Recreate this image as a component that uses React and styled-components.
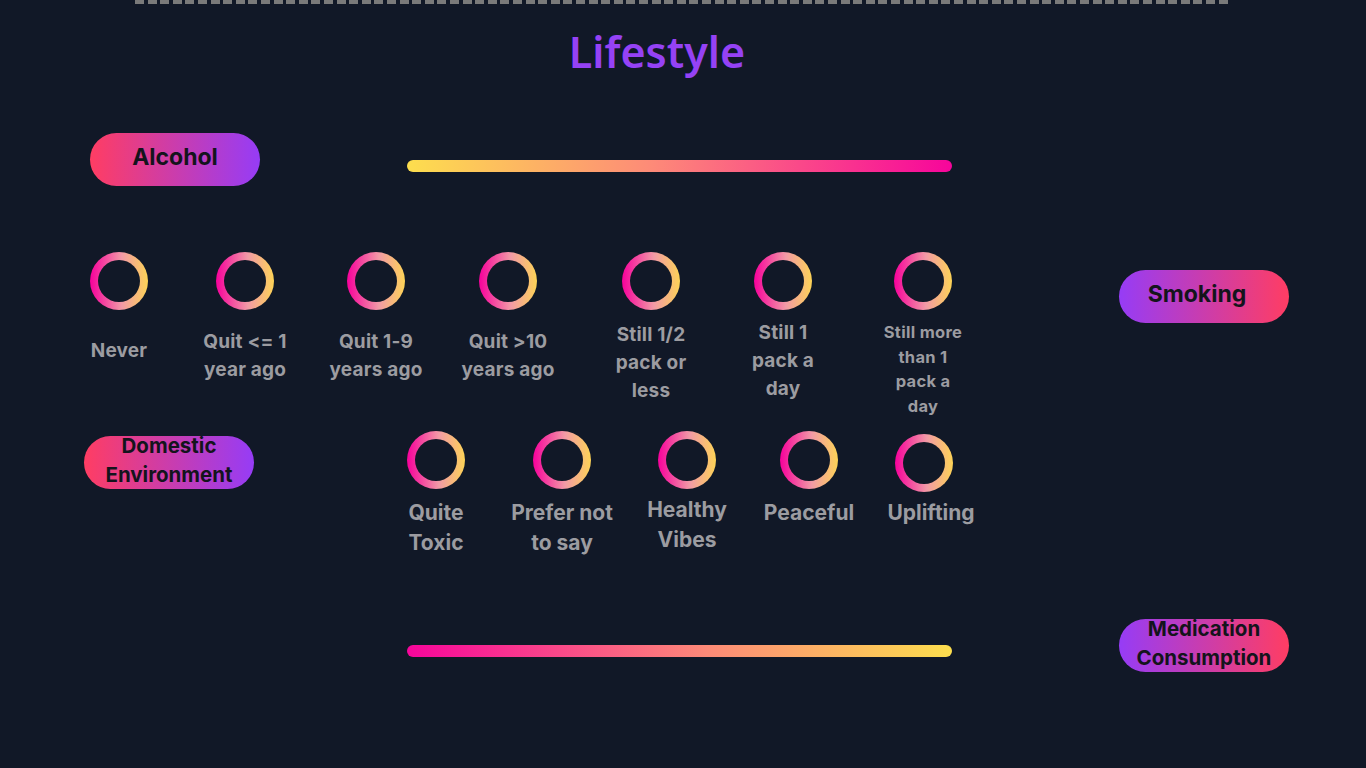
import React from 'react';
import styled, { createGlobalStyle } from 'styled-components';

const GlobalStyle = createGlobalStyle`
  html, body {
    margin: 0;
    padding: 0;
    background: #111827;
  }
  body {
    width: 1366px;
    height: 768px;
    overflow: hidden;
    font-family: Inter, "Liberation Sans", sans-serif;
  }
`;

const Page = styled.div`
  width: 1366px;
  height: 768px;
  background: #111827;
  display: flex;
  flex-direction: column;
`;

const DashedRule = styled.div`
  height: 4px;
  margin: 0 138px 0 135px;
  background: repeating-linear-gradient(90deg, #7a7a7a 0 9px, transparent 9px 12.6px);
`;

const Title = styled.h1`
  margin: 22px 0 0;
  padding-right: 52px;
  text-align: center;
  font-family: "Noto Sans", "DejaVu Sans", sans-serif;
  font-weight: 600;
  font-size: 43px;
  line-height: 52px;
  color: #9542f5;
`;

const Row = styled.div`
  display: flex;
  align-items: flex-start;
  margin-top: ${(p) => p.top}px;
  padding-left: ${(p) => p.left || 0}px;
  padding-right: ${(p) => p.right || 0}px;
`;

const Pill = styled.div`
  flex: none;
  width: 170px;
  height: 53px;
  border-radius: 27px;
  display: flex;
  align-items: center;
  justify-content: center;
  text-align: center;
  white-space: nowrap;
  margin-top: ${(p) => p.top || 0}px;
  margin-left: ${(p) => (p.push ? 'auto' : '0')};
  background: ${(p) =>
    p.reverse
      ? 'linear-gradient(90deg, #963cf6 0%, #ff3d63 100%)'
      : 'linear-gradient(90deg, #ff3d63 0%, #963cf6 100%)'};
  color: #14141c;
  font-weight: 700;
  font-size: ${(p) => p.size || 23}px;
  line-height: ${(p) => p.lh || 26}px;
  padding-right: ${(p) => p.shift || 0}px;
  padding-bottom: 5px;
  box-sizing: border-box;
`;

const Bar = styled.div`
  flex: none;
  width: 545px;
  height: 12px;
  border-radius: 6px;
  margin-top: ${(p) => p.top}px;
  margin-left: ${(p) => p.left}px;
  background: ${(p) =>
    p.reverse
      ? 'linear-gradient(90deg, #f7059b 0%, #fd8a78 55%, #fdde4e 100%)'
      : 'linear-gradient(90deg, #fdde4e 0%, #fd8a78 45%, #f7059b 100%)'};
`;

const Options = styled.div`
  display: grid;
  grid-template-columns: ${(p) => p.cols};
  margin-left: ${(p) => p.left || 0}px;
`;

const Option = styled.div`
  display: flex;
  flex-direction: column;
  align-items: center;
  padding-top: ${(p) => p.dy || 0}px;
`;

const Ring = styled.div`
  width: 58px;
  height: 58px;
  box-sizing: border-box;
  padding: 8px;
  border-radius: 50%;
  background: linear-gradient(90deg, #f7009b 0%, #f29aa6 55%, #fdd356 100%);
`;

const RingHole = styled.div`
  width: 100%;
  height: 100%;
  border-radius: 50%;
  background: #111827;
`;

const Label = styled.div`
  margin-top: ${(p) => p.gap}px;
  margin-left: ${(p) => (p.dx || 0) * 2}px;
  text-align: center;
  color: #9c9ca1;
  font-weight: 700;
  font-size: ${(p) => p.size}px;
  line-height: ${(p) => p.lh}px;
  letter-spacing: ${(p) => p.ls || 0}px;
  white-space: pre;
`;

const smoking = [
  { text: 'Never', gap: 27 },
  { text: 'Quit <= 1\nyear ago', gap: 18 },
  { text: 'Quit 1-9\nyears ago', gap: 18 },
  { text: 'Quit >10\nyears ago', gap: 18 },
  { text: 'Still 1/2\npack or\nless', gap: 11 },
  { text: 'Still 1\npack a\nday', gap: 9 },
  { text: 'Still more\nthan 1\npack a\nday', gap: 10, size: 16.5, lh: 24.5, ls: 0.3 },
];

const domestic = [
  { text: 'Quite\nToxic', gap: 9 },
  { text: 'Prefer not\nto say', gap: 9, dy: -4 },
  { text: 'Healthy\nVibes', gap: 6 },
  { text: 'Peaceful', gap: 9 },
  { text: 'Uplifting', gap: 6, dy: 3, dx: 7 },
];

const OptionItem = ({ text, gap, dy, dx, size = 19, lh = 28, ls = 0.2 }) => (
  <Option dy={dy}>
    <Ring>
      <RingHole />
    </Ring>
    <Label gap={gap} dx={dx} size={size} lh={lh} ls={ls}>
      {text}
    </Label>
  </Option>
);

export default function App() {
  return (
    <Page>
      <GlobalStyle />
      <DashedRule />
      <Title>Lifestyle</Title>

      <Row top={55} left={90}>
        <Pill>Alcohol</Pill>
        <Bar top={27} left={147} />
      </Row>

      <Row top={66} left={58} right={77}>
        <Options cols="122px 130px 132px 132px 154px 110px 170px">
          {smoking.map((o) => (
            <OptionItem key={o.text} {...o} />
          ))}
        </Options>
        <Pill push reverse top={18} shift={14}>
          Smoking
        </Pill>
      </Row>

      <Row top={13} left={84}>
        <Pill top={5} size={20.5} lh={29}>
          Domestic
          <br />
          Environment
        </Pill>
        <Options left={119} cols="126px 126px 124px 120px 110px">
          {domestic.map((o) => (
            <OptionItem key={o.text} size={21} lh={30} ls={0} {...o} />
          ))}
        </Options>
      </Row>

      <Row top={61} right={77}>
        <Bar reverse top={26} left={407} />
        <Pill push reverse size={20.5} lh={29}>
          Medication
          <br />
          Consumption
        </Pill>
      </Row>
    </Page>
  );
}
